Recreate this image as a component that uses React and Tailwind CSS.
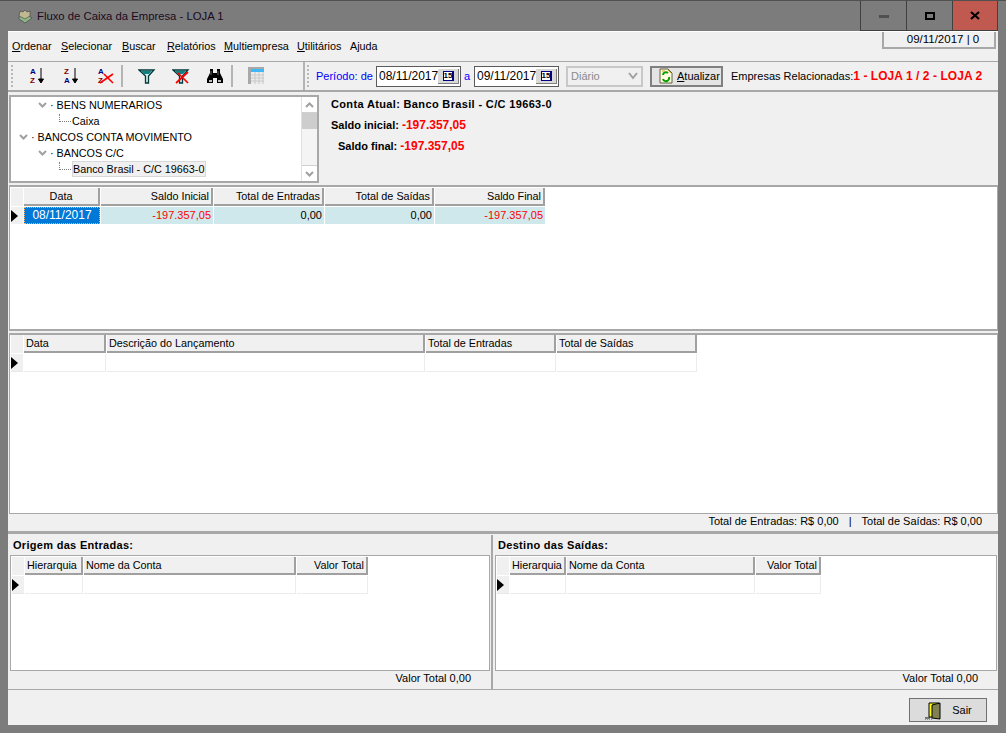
import React from 'react';

const sans = "font-['Liberation_Sans',Arial,sans-serif]";

function U({ children }) {
    return <span className="underline underline-offset-1">{children}</span>;
}

function MenuBar() {
    const items = [
        ['O', 'rdenar', 'w-[49px]'],
        ['S', 'elecionar', 'w-[61px]'],
        ['B', 'uscar', 'w-[45px]'],
        ['R', 'elatórios', 'w-[57px]'],
        ['M', 'ultiempresa', 'w-[73px]'],
        ['U', 'tilitários', 'w-[53px]'],
        ['', 'Ajuda', 'w-[40px]'],
    ];
    return (
        <div className="h-[30px] flex justify-between bg-[#f0f0f0] border-b border-[#a8a8a8]">
            <div className="flex pl-1 pt-2 text-[10.8px] leading-[13px]">
                {items.map(([u, rest, w]) => (
                    <div key={rest} className={w}><U>{u}</U>{rest}</div>
                ))}
            </div>
            <div className="w-[114px] h-[17px] mr-[2px] border-2 border-t-0 border-[#a8a8a8] text-[11.5px] leading-[15px] text-center pl-2">09/11/2017 | 0</div>
        </div>
    );
}

function SortIcon({ top, bottom, crossed }) {
    return (
        <svg width="18" height="18" viewBox="0 0 18 18">
            <text x="1" y="7" fontSize="8" fontWeight="bold" fontFamily="Liberation Sans" fill={top === 'A' ? '#000080' : '#800000'}>{top}</text>
            <text x="1" y="16" fontSize="8" fontWeight="bold" fontFamily="Liberation Sans" fill={bottom === 'A' ? '#000080' : '#800000'}>{bottom}</text>
            {crossed ? (
                <path d="M3 16 L16 7 M7 7 L16 16" stroke="#ff0000" strokeWidth="1.6" fill="none" />
            ) : (
                <path d="M12 1 V12 M9.5 12 H14.5 L12 16 Z" stroke="#000" strokeWidth="1" fill="#000" />
            )}
        </svg>
    );
}

function FunnelIcon({ crossed }) {
    return (
        <svg width="18" height="18" viewBox="0 0 18 18">
            <path d="M1 3 H16 L10.5 9 V16 H7.5 V9 Z" fill="#d8f0f0" stroke="#003838" strokeWidth="1.3" />
            <path d="M3 4 H14 L11 7 H6 Z" fill="#108080" />
            {crossed && <path d="M4 16 L16 5 M6 6 L16 16" stroke="#ff0000" strokeWidth="1.7" fill="none" />}
        </svg>
    );
}

function BinocularsIcon() {
    return (
        <svg width="18" height="18" viewBox="0 0 18 18">
            <path d="M4 2 H7 V6 H11 V2 H14 V6 L17 12 V16 H11 V11 H7 V16 H1 V12 L4 6 Z" fill="#000" />
            <path d="M3 14 H6 M12 14 H15" stroke="#fff" strokeWidth="1.4" />
            <path d="M5 4 V8 M12 4 V8" stroke="#808080" strokeWidth="0.8" />
        </svg>
    );
}

function GridIcon() {
    return (
        <svg width="18" height="18" viewBox="0 0 18 18">
            <rect x="1" y="0" width="16" height="17" fill="#ececec" />
            <rect x="1" y="0" width="16" height="2" fill="#a8a8a8" />
            <rect x="4" y="2" width="13" height="3" fill="#40b8f8" />
            <rect x="1" y="2" width="3" height="15" fill="#a8a8a8" />
            <path d="M4 8 H17 M4 11 H17 M4 14 H17 M8 5 V17 M12 5 V17 M16 5 V17" stroke="#c8c8c8" strokeWidth="1" />
        </svg>
    );
}

function Grip() {
    return <div className="w-[3px] h-[22px] border-l-2 border-dotted border-[#b8b8b8]" />;
}

function DateBox({ value }) {
    return (
        <div className="w-[85px] h-[21px] shrink-0 flex items-center justify-between border border-[#5a5a5a] bg-white pl-[2px] pr-[1px] text-[12px]">
            <span>{value}</span>
            <div className="w-[21px] h-[15px] bg-[#d8d8d8] border-b border-r border-[#808080] flex items-center justify-center">
                <span className="w-[11px] h-[10px] bg-white border border-[#000080] border-r-2 text-[8px] leading-[8px] text-center font-bold">15</span>
            </div>
        </div>
    );
}

function Toolbar() {
    return (
        <div className="h-[30px] flex items-center whitespace-nowrap bg-[#f0f0f0] border-b-2 border-[#a8a8a8] text-[11px]">
            <div className="w-[297px] h-full shrink-0 flex items-center border-r-2 border-[#b4b4b4] pl-[3px]">
                <Grip />
                <div className="ml-[15px] flex gap-[16px]">
                    <SortIcon top="A" bottom="Z" />
                    <SortIcon top="Z" bottom="A" />
                    <SortIcon top="A" bottom="Z" crossed />
                </div>
                <div className="w-[2px] h-[22px] ml-[6px] mr-[15px] bg-[#b4b4b4]" />
                <div className="flex gap-[16px]">
                    <FunnelIcon />
                    <FunnelIcon crossed />
                    <BinocularsIcon />
                </div>
                <div className="w-[2px] h-[22px] ml-[7px] mr-[14px] bg-[#b4b4b4]" />
                <GridIcon />
            </div>
            <div className="pl-[2px]"><Grip /></div>
            <span className="ml-[6px] text-[#0000ff] w-[60px] shrink-0">Período: de</span>
            <DateBox value="08/11/2017" />
            <span className="mx-[3px] w-[7px] text-[#0000ff]">a</span>
            <DateBox value="09/11/2017" />
            <div className="ml-[7px] w-[77px] h-[21px] shrink-0 flex items-center justify-between border-2 border-[#c8c8c8] bg-[#f0f0f0] px-[3px] text-[#8a8a8a]">
                <span>Diário</span>
                <svg width="10" height="8" viewBox="0 0 10 8"><path d="M1 1 L5 6 L9 1" fill="none" stroke="#a0a0a0" strokeWidth="2" /></svg>
            </div>
            <div className="ml-[7px] w-[73px] h-[21px] shrink-0 flex items-center gap-[4px] border-2 border-[#808080] bg-[#e4e4e4] pl-[7px]">
                <svg width="14" height="16" viewBox="0 0 14 16">
                    <path d="M1 1 H9 L13 5 V15 H1 Z" fill="#fffbe0" stroke="#606040" />
                    <path d="M4 7 A3 3 0 0 1 9 5 M10 9 A3 3 0 0 1 4 11" fill="none" stroke="#00a000" strokeWidth="2" />
                    <path d="M9 2 L12 5 M3 3 H6" stroke="#d0a020" />
                </svg>
                <span><U>A</U>tualizar</span>
            </div>
            <span className="ml-[8px] shrink-0">Empresas Relacionadas:</span>
            <span className="font-bold text-[#ff0000] text-[12px] tracking-[0.05px] shrink-0">1 - LOJA 1 / 2 - LOJA 2</span>
        </div>
    );
}

function Chevron({ className }) {
    return (
        <svg className={className} width="9" height="6" viewBox="0 0 9 6">
            <path d="M1 1 L4.5 4.5 L8 1" fill="none" stroke="#a0a0a0" strokeWidth="2" />
        </svg>
    );
}

function TreeRow({ indent, chevron, selected, children }) {
    return (
        <div className={`h-[16px] flex items-center whitespace-nowrap ${indent}`}>
            {chevron ? <Chevron className="mr-[3px]" /> : <div className="w-[12px] h-[8px] mb-[6px] mr-[1px] border-l border-b border-dotted border-[#808080]" />}
            <span className={selected ? 'border border-[#d8d8d8] bg-[#f0f0f0] h-[16px] leading-[14px] pr-[1px]' : ''}>{chevron ? '· ' : ''}{children}</span>
        </div>
    );
}

function AccountPanel() {
    return (
        <div className="h-[90px] flex bg-[#f0f0f0]">
            <div className="w-[310px] h-[88px] border-2 border-[#a8a8a8] bg-white flex justify-between overflow-hidden">
                <div className="w-[292px] text-[10.8px]">
                    <TreeRow indent="pl-[27px]" chevron>BENS NUMERARIOS</TreeRow>
                    <TreeRow indent="pl-[48px]">Caixa</TreeRow>
                    <TreeRow indent="pl-[8px]" chevron>BANCOS CONTA MOVIMENTO</TreeRow>
                    <TreeRow indent="pl-[27px]" chevron>BANCOS C/C</TreeRow>
                    <TreeRow indent="pl-[48px]" selected>Banco Brasil - C/C 19663-0</TreeRow>
                </div>
                <div className="w-[16px] flex flex-col border-l border-[#e0e0e0] bg-[#f4f4f4]">
                    <div className="h-[16px] flex items-center justify-center bg-white border-b border-[#d0d0d0]"><Chevron className="rotate-180" /></div>
                    <div className="h-[16px] bg-[#cdcdcd]" />
                    <div className="flex-1" />
                    <div className="h-[16px] flex items-center justify-center bg-white border-t border-[#d0d0d0]"><Chevron /></div>
                </div>
            </div>
            <div className="pl-[12px] text-[11px] font-bold whitespace-nowrap">
                <div className="h-[20px] leading-[19px] tracking-[0.35px]">Conta Atual: Banco Brasil - C/C 19663-0</div>
                <div className="h-[21px] leading-[21px]">Saldo inicial: <span className="text-[#ff0000] text-[12px]">-197.357,05</span></div>
                <div className="h-[21px] leading-[21px] pl-[7px]">Saldo final: <span className="text-[#ff0000] text-[12px]">-197.357,05</span></div>
            </div>
        </div>
    );
}

function Triangle() {
    return <div className="w-0 h-0 border-y-[6px] border-y-transparent border-l-[7px] border-l-black" />;
}

function GridHeader({ columns }) {
    return (
        <div className="flex h-[18px]">
            <div className="w-[12px] mr-[1px] bg-[#f0f0f0]" />
            {columns.map((c) => (
                <div key={c.label} className={`${c.w} ${c.right ? 'text-right' : ''} shrink-0 mr-[1px] px-[2px] whitespace-nowrap bg-[#f0f0f0] border-r-2 border-b-2 border-[#a0a0a0] text-[10.8px] leading-[17px]`}>{c.label}</div>
            ))}
        </div>
    );
}

function EmptyRow({ columns }) {
    return (
        <div className="flex h-[18px] mt-[1px]">
            <div className="w-[12px] mr-[1px] bg-[#f0f0f0] border-b border-[#e8e8e8] flex items-center"><Triangle /></div>
            {columns.map((c) => (
                <div key={c.label} className={`${c.w} shrink-0 mr-[1px] border-b border-r border-[#ececec]`} />
            ))}
        </div>
    );
}

const caixaColumns = [
    { label: 'Data', w: 'w-[76px] text-center' },
    { label: 'Saldo Inicial', w: 'w-[112px]', right: true },
    { label: 'Total de Entradas', w: 'w-[110px]', right: true },
    { label: 'Total de Saídas', w: 'w-[109px]', right: true },
    { label: 'Saldo Final', w: 'w-[110px]', right: true },
];

function CaixaGrid() {
    const red = 'text-[#ff0000]';
    return (
        <div className="h-[146px] border-2 border-[#a8a8a8] border-x-[1px] bg-white pl-[1px] pt-[1px]">
            <GridHeader columns={caixaColumns} />
            <div className="flex h-[17px] mt-[1px] text-[11px] leading-[16px]">
                <div className="w-[12px] mr-[1px] bg-[#f0f0f0] flex items-center"><Triangle /></div>
                <div className="w-[76px] mr-[1px] bg-[#0078d7] text-white text-center text-[12px] border border-dotted border-[#ffb060] leading-[14px]">08/11/2017</div>
                <div className={`w-[112px] mr-[1px] bg-[#cfe8ec] text-right pr-[2px] ${red}`}>-197.357,05</div>
                <div className="w-[110px] mr-[1px] bg-[#cfe8ec] text-right pr-[2px]">0,00</div>
                <div className="w-[109px] mr-[1px] bg-[#cfe8ec] text-right pr-[2px]">0,00</div>
                <div className={`w-[110px] bg-[#cfe8ec] text-right pr-[2px] ${red}`}>-197.357,05</div>
            </div>
        </div>
    );
}

const lancColumns = [
    { label: 'Data', w: 'w-[82px]' },
    { label: 'Descrição do Lançamento', w: 'w-[318px]' },
    { label: 'Total de Entradas', w: 'w-[130px]' },
    { label: 'Total de Saídas', w: 'w-[140px]' },
];

function LancamentosGrid() {
    return (
        <div className="h-[181px] mt-[2px] border-2 border-[#a8a8a8] border-x-[1px] border-b-[1px] bg-white pl-[1px]">
            <GridHeader columns={lancColumns} />
            <EmptyRow columns={lancColumns} />
        </div>
    );
}

function ContaPanel({ title, grow, columns, total, totalPad }) {
    return (
        <div className={`${grow} flex flex-col`}>
            <div className="h-[20px] pl-[3px] pt-[2px] text-[11px] font-bold tracking-[0.3px] leading-[16px]">{title}</div>
            <div className="h-[116px] border border-[#a8a8a8] bg-white pl-[1px] pt-[1px]">
                <GridHeader columns={columns} />
                <EmptyRow columns={columns} />
            </div>
            <div className={`h-[17px] text-right ${totalPad} text-[11px] leading-[15px]`}>{total}</div>
        </div>
    );
}

export default function App() {
    return (
        <div className={`w-[1006px] h-[733px] bg-[#7c7c7c] text-black flex flex-col ${sans}`}>
            <div className="h-[31px] flex justify-between border-t border-[#505050] shrink-0">
                <div className="flex items-center pl-[17px] gap-[5px] pt-[1px]">
                    <svg width="15" height="15" viewBox="0 0 15 15">
                        <path d="M1 9 L8 5 L15 9 L8 14 Z" fill="#8fb888" stroke="#404040" strokeWidth="0.6" />
                        <path d="M2 7 L3 2 L6 3 L8 1 L10 3 L13 2 L13 7 L8 10 Z" fill="#c0b890" stroke="#404040" strokeWidth="0.6" />
                    </svg>
                    <span className="text-[#1a0a20] text-[11.3px]">Fluxo de Caixa da Empresa - LOJA 1</span>
                </div>
                <div className="flex mr-[8px] h-[30px] border-b border-[#404040]">
                    <div className="w-[47px] border-x border-[#404040] flex items-center justify-center pt-[2px]"><div className="w-[10px] h-[3px] bg-[#505050]" /></div>
                    <div className="w-[46px] border-r border-[#404040] flex items-center justify-center"><div className="w-[10px] h-[8px] border-2 border-black" /></div>
                    <div className="w-[45px] border-r border-[#404040] bg-[#c05a50] flex items-center justify-center">
                        <svg width="10" height="9" viewBox="0 0 10 9"><path d="M1 1 L9 8 M9 1 L1 8" stroke="#000" strokeWidth="2.2" /></svg>
                    </div>
                </div>
            </div>
            <div className="mx-[8px] h-[694px] flex flex-col bg-[#f0f0f0] border-t border-white">
                <MenuBar />
                <Toolbar />
                <div className="pt-[3px] pl-[1px]">
                    <AccountPanel />
                    <CaixaGrid />
                    <LancamentosGrid />
                </div>
                <div className="h-[20px] flex justify-end items-start pt-[1px] pr-[16px] text-[11px] leading-[13px] border-b-[3px] border-[#a8a8a8]">
                    <span>Total de Entradas: R$ 0,00</span>
                    <span className="mx-[10px]">|</span>
                    <span>Total de Saídas: R$ 0,00</span>
                </div>
                <div className="flex h-[155px] border-b border-[#a8a8a8] mt-[1px]">
                    <ContaPanel
                        title="Origem das Entradas:"
                        grow="w-[485px] pl-[2px] border-r-2 border-[#a8a8a8] pr-[1px]"
                        columns={[
                            { label: 'Hierarquia', w: 'w-[58px]' },
                            { label: 'Nome da Conta', w: 'w-[212px]' },
                            { label: 'Valor Total', w: 'w-[71px]', right: true },
                        ]}
                        total="Valor Total 0,00"
                        totalPad="pr-[19px]"
                    />
                    <ContaPanel
                        title="Destino das Saídas:"
                        grow="flex-1 pl-[2px] pr-[1px]"
                        columns={[
                            { label: 'Hierarquia', w: 'w-[56px]' },
                            { label: 'Nome da Conta', w: 'w-[188px]' },
                            { label: 'Valor Total', w: 'w-[65px]', right: true },
                        ]}
                        total="Valor Total 0,00"
                        totalPad="pr-[19px]"
                    />
                </div>
                <div className="flex-1 flex justify-end items-start pt-[8px] pr-[11px]">
                    <div className="w-[78px] h-[24px] flex items-center justify-center gap-[10px] bg-[#dcdcdc] border border-[#707070] text-[11px]">
                        <svg width="18" height="19" viewBox="0 0 18 19">
                            <path d="M1 17 H6" stroke="#000" />
                            <path d="M5 2 H15 V16 H5 Z" fill="#ffff00" stroke="#000" />
                            <path d="M8 4 L16 2 V18 L8 17 Z" fill="#808050" stroke="#000" />
                            <path d="M1 18 H9" stroke="#a0a000" strokeDasharray="1 1" strokeWidth="2" />
                        </svg>
                        <span>Sair</span>
                    </div>
                </div>
            </div>
        </div>
    );
}
